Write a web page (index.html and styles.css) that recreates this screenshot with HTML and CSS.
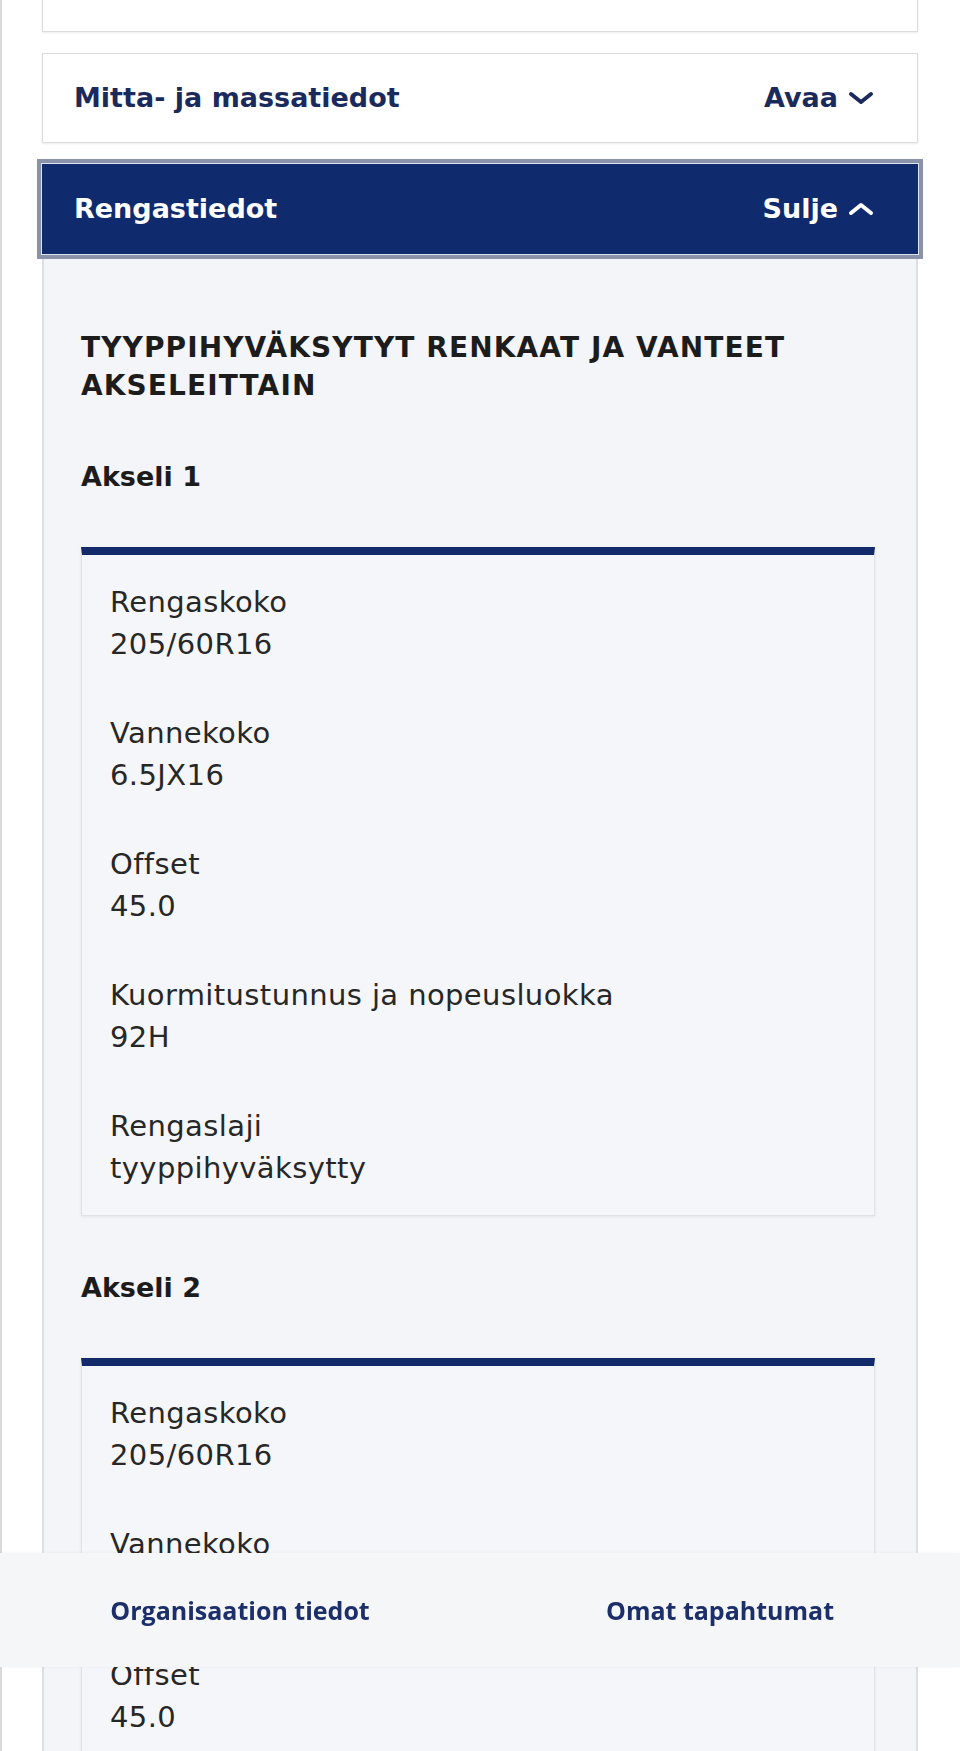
FILE: index.html
```html
<!DOCTYPE html>
<html lang="fi">
<head>
<meta charset="utf-8">
<title>Rengastiedot</title>
<link rel="stylesheet" href="styles.css">
</head>
<body>
<div class="page">
  <div class="accordion">
    <div class="acc-header acc-first">
      <span class="acc-title">Yleiset tiedot</span>
      <span class="acc-toggle">Avaa
        <svg class="chev" viewBox="0 0 26 14" width="26" height="14"><polyline points="3,3 13,11 23,3"/></svg>
      </span>
    </div>
    <div class="acc-header">
      <span class="acc-title">Mitta- ja massatiedot</span>
      <span class="acc-toggle">Avaa
        <svg class="chev" viewBox="0 0 26 14" width="26" height="14"><polyline points="3,3 13,11 23,3"/></svg>
      </span>
    </div>
    <div class="acc-header acc-open">
      <span class="acc-title">Rengastiedot</span>
      <span class="acc-toggle">Sulje
        <svg class="chev" viewBox="0 0 26 14" width="26" height="14"><polyline points="3,11 13,3 23,11"/></svg>
      </span>
    </div>
    <div class="acc-panel">
      <h2 class="panel-title">TYYPPIHYVÄKSYTYT RENKAAT JA VANTEET AKSELEITTAIN</h2>

      <h3 class="axle-title">Akseli 1</h3>
      <div class="axle-card">
        <div class="item"><div class="label">Rengaskoko</div><div class="value">205/60R16</div></div>
        <div class="item"><div class="label">Vannekoko</div><div class="value">6.5JX16</div></div>
        <div class="item"><div class="label">Offset</div><div class="value">45.0</div></div>
        <div class="item"><div class="label">Kuormitustunnus ja nopeusluokka</div><div class="value">92H</div></div>
        <div class="item"><div class="label">Rengaslaji</div><div class="value">tyyppihyväksytty</div></div>
      </div>

      <h3 class="axle-title">Akseli 2</h3>
      <div class="axle-card">
        <div class="item"><div class="label">Rengaskoko</div><div class="value">205/60R16</div></div>
        <div class="item"><div class="label">Vannekoko</div><div class="value">6.5JX16</div></div>
        <div class="item"><div class="label">Offset</div><div class="value">45.0</div></div>
        <div class="item"><div class="label">Kuormitustunnus ja nopeusluokka</div><div class="value">92H</div></div>
        <div class="item"><div class="label">Rengaslaji</div><div class="value">tyyppihyväksytty</div></div>
      </div>
    </div>
  </div>
</div>

<nav class="bottom-nav">
  <a class="nav-link" href="#">Organisaation tiedot</a>
  <a class="nav-link" href="#">Omat tapahtumat</a>
</nav>
</body>
</html>
```

FILE: styles.css
```css
html, body {
  margin: 0;
  padding: 0;
  background: #ffffff;
}

body {
  font-family: "DejaVu Sans", "Liberation Sans", sans-serif;
  color: #262626;
  border-left: 2px solid #d9d9dc;
  min-height: 1751px;
  box-sizing: border-box;
  overflow: hidden;
}

.page {
  padding: 0 42px 0 40px;
}

.accordion {
  display: flex;
  flex-direction: column;
}

.acc-header {
  height: 90px;
  box-sizing: border-box;
  display: flex;
  align-items: center;
  justify-content: space-between;
  padding: 0 43px 0 31px;
  background: #ffffff;
  border: 1px solid #dcdcdf;
  box-shadow: 0 1px 2px rgba(0, 0, 0, 0.08);
  color: #1b2a5c;
  font-weight: bold;
  font-size: 27px;
  margin-top: 21px;
}

.acc-first {
  margin-top: -58px;
}

.acc-title {
  line-height: 38px;
}

.acc-toggle {
  display: flex;
  align-items: center;
  gap: 10px;
  line-height: 38px;
}

.chev {
  display: block;
  fill: none;
  stroke: currentColor;
  stroke-width: 4;
  stroke-linecap: round;
  stroke-linejoin: round;
}

.acc-open {
  background: #0f2b6e;
  border: 1px solid #0f2b6e;
  color: #ffffff;
  box-shadow: 0 0 0 1px #dfe4f0, 0 0 0 5px #8a93a9;
  position: relative;
  z-index: 1;
}

.acc-panel {
  background: #f4f5f8;
  border-left: 2px solid #dedfe3;
  border-right: 2px solid #dedfe3;
  padding: 75px 41px 0 37px;
  min-height: 1600px;
}

.panel-title {
  margin: 0;
  font-size: 28px;
  line-height: 38px;
  letter-spacing: 1.1px;
  font-weight: bold;
  color: #1c1c1c;
}

.axle-title {
  margin: 53px 0 0 0;
  font-size: 27px;
  line-height: 38px;
  font-weight: bold;
  color: #1c1c1c;
}

.axle-card {
  margin-top: 51px;
  background: #f5f6f9;
  border: 1px solid #e1e2e6;
  border-top: 8px solid #12296a;
  box-shadow: 0 1px 3px rgba(0, 0, 0, 0.07);
  padding: 26px 28px 26px 28px;
  display: flex;
  flex-direction: column;
  gap: 47px;
}

.item {
  font-size: 29px;
  line-height: 42px;
  letter-spacing: 0.4px;
  color: #272727;
}

.bottom-nav {
  position: fixed;
  left: 0;
  right: 0;
  top: 1553px;
  height: 114px;
  background: #f5f6f8;
  box-shadow: 0 0 3px rgba(0, 0, 0, 0.06);
  display: grid;
  grid-template-columns: 1fr 1fr;
  align-items: center;
  justify-items: center;
  z-index: 5;
}

.nav-link {
  font-family: "Open Sans", "Liberation Sans", sans-serif;
  font-weight: bold;
  font-size: 25px;
  color: #1c2f6a;
  text-decoration: none;
}
```
